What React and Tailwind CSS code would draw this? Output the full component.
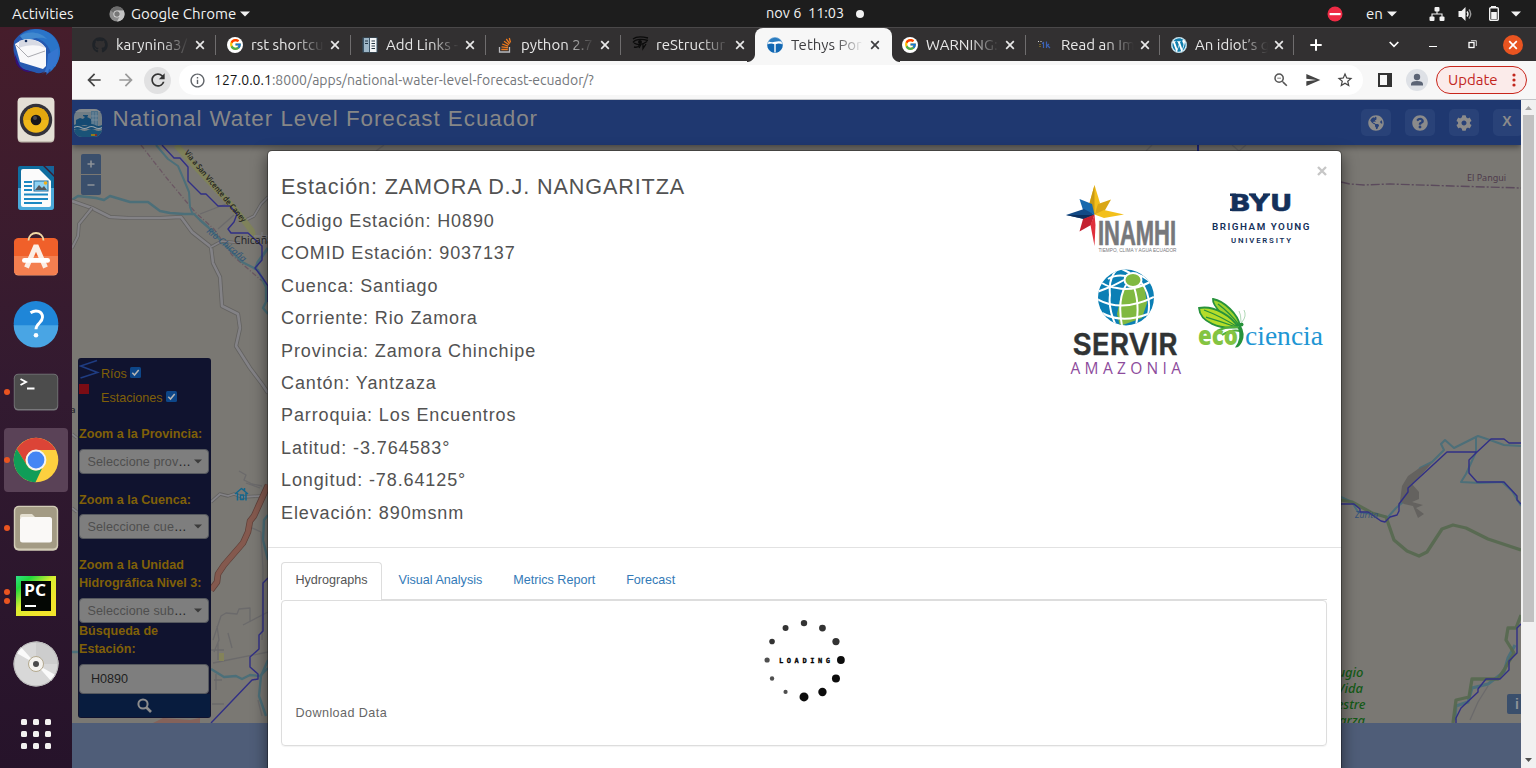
import React from "react";
import { FcGoogle } from "react-icons/fc";
import { FaGithub, FaWordpress, FaGlobeAmericas, FaQuestionCircle, FaCog } from "react-icons/fa";
import {
  MdArrowBack,
  MdArrowForward,
  MdRefresh,
  MdInfoOutline,
  MdZoomOut,
  MdSend,
  MdStarBorder,
} from "react-icons/md";

const UI = "font-['Ubuntu','Open_Sans',sans-serif]";
const ARIAL = "font-['Liberation_Sans',Arial,sans-serif]";

/* ---------- Desktop top bar ---------- */

function Caret({ className = "" }) {
  return (
    <svg className={className} width="10" height="6" viewBox="0 0 10 6">
      <path d="M0 0.5H10L5 5.5Z" fill="currentColor" />
    </svg>
  );
}

function TopBar() {
  return (
    <div className={`relative z-10 flex h-[27px] shrink-0 items-center bg-[#1d1d1d] text-[15px] leading-none text-[#f2f2f2] ${UI}`}>
      <span className="ml-3 w-[62px] whitespace-nowrap">Activities</span>
      <svg className="ml-[35px]" width="16" height="16" viewBox="0 0 16 16">
        <circle cx="8" cy="8" r="7.6" fill="#8c8c8c" />
        <path d="M1.4 4.3A7.6 7.6 0 0 1 14.7 4.5H8A3.5 3.5 0 0 0 4.7 7Z" fill="#6c6c6c" />
        <path d="M14.7 4.5A7.6 7.6 0 0 1 8 15.6L11.2 9.5A3.5 3.5 0 0 0 8 4.5Z" fill="#c4c4c4" />
        <circle cx="8" cy="8" r="3.6" fill="#ddd" />
        <circle cx="8" cy="8" r="2.7" fill="#777" />
      </svg>
      <span className="ml-[6px] w-[105px] whitespace-nowrap">Google Chrome</span>
      <Caret className="ml-1" />
      <div className="ml-[516px] flex items-center whitespace-pre">
        <span className="w-[80px] text-[14.5px]">nov 6  11:03</span>
        <span className="ml-[10px] size-2 rounded-full bg-[#f2f2f2]" />
      </div>
      <div className="ml-auto flex items-center pr-[15px]">
        <svg width="16" height="16" viewBox="0 0 16 16">
          <circle cx="8" cy="8" r="7.5" fill="#ee2b45" />
          <rect x="2.6" y="7" width="11" height="2.2" fill="#fff" />
        </svg>
        <span className="ml-[23px] w-[18px]">en</span>
        <Caret className="ml-[3px]" />
        <svg className="ml-8" width="16" height="16" viewBox="0 0 16 16" fill="#f2f2f2">
          <rect x="5.5" y="1" width="5" height="4.5" rx="1" />
          <rect x="0.5" y="10.5" width="5" height="4.5" rx="1" />
          <rect x="10.5" y="10.5" width="5" height="4.5" rx="1" />
          <path d="M8 5V8M3 11V8H13V11" fill="none" stroke="#f2f2f2" strokeWidth="1.1" />
        </svg>
        <svg className="ml-[13px]" width="16" height="16" viewBox="0 0 16 16">
          <path d="M0.5 5H3.5L7.5 1V15L3.5 11H0.5Z" fill="#f2f2f2" />
          <path d="M9 5.5Q11 8 9 10.5" stroke="#f2f2f2" strokeWidth="1.4" fill="none" />
          <path d="M11 3.5Q14.4 8 11 12.5" stroke="#9a9a9a" strokeWidth="1.4" fill="none" />
        </svg>
        <svg className="ml-[14px]" width="12" height="17" viewBox="0 0 12 17">
          <rect x="3" y="1" width="5" height="2" fill="#f2f2f2" />
          <rect x="1.7" y="2.7" width="8.6" height="12.6" rx="1" fill="none" stroke="#f2f2f2" strokeWidth="1.4" />
          <rect x="3.2" y="7" width="5.6" height="7" fill="#f2f2f2" />
        </svg>
        <Caret className="ml-[11px]" />
      </div>
    </div>
  );
}

/* ---------- Dock ---------- */

function ThunderbirdIcon() {
  return (
    <svg width="48" height="48" viewBox="0 0 48 48">
      <path d="M2 13C6 8 11 1 23 1C38 1 48 11 48 23C48 33 41 42 34 47C35 44 35 43 34 42C30 46 26 46 22 44L10 41C4 36 0 25 2 13Z" fill="#2559b0" />
      <path d="M8 8C14 2 24 0 31 2C41 5 47 14 48 23C48 31 45 38 38 44C42 34 40 22 33 15C27 9 16 8 8 8Z" fill="#2a74c8" />
      <path d="M8 8C14 3 28 3 35 11C28 8 20 11 12 13Z" fill="#4189cf" />
      <path d="M2 24L7 36C9 41 14 42 20 44C13 45 7 41 4 35Z" fill="#33107a" />
      <path d="M3 16C12 9 26 9 34 20L34 38L31 41L8 34Z" fill="#f8f8fa" />
      <path d="M4 17L16 29L33 23" fill="none" stroke="#a9aab0" strokeWidth="1" />
      <path d="M7 13C16 9 28 12 33 20C25 16 15 17 7 20Z" fill="#d7dae4" />
      <path d="M30 46C36 42 35 34 36 26L46 20C47 26 45 36 43 39L41 38L40 42L37 41L36 45L33 44Z" fill="#3575cf" />
      <circle cx="14" cy="13" r="1.3" fill="#122c5c" />
    </svg>
  );
}

function RhythmboxIcon() {
  return (
    <svg width="48" height="48" viewBox="0 0 48 48">
      <rect x="5.700" y="2" width="36.600" height="44.500" rx="4" fill="#c5bfb4" />
      <rect x="5.700" y="1.500" width="36.600" height="43.500" rx="4" fill="#e4dfd5" />
      <circle cx="24" cy="24" r="16.200" fill="#33323a" />
      <circle cx="24" cy="24" r="12.800" fill="#efb81a" />
      <path d="M11.200 24A12.800 12.800 0 0 1 36.800 24Z" fill="#e3a80f" />
      <circle cx="24" cy="24" r="5.300" fill="#17171b" />
      <circle cx="23" cy="22" r="2" fill="#474750" />
    </svg>
  );
}

function WriterIcon() {
  return (
    <svg width="48" height="48" viewBox="0 0 48 48">
      <path d="M8 2H31L42 13V43Q42 46 39 46H9Q6 46 6 43V4Q6 2 8 2Z" fill="#0f6d9f" />
      <path d="M6 24H42V43Q42 46 39 46H9Q6 46 6 43Z" fill="#4aa9da" />
      <path d="M11 5H27L39 17V41Q39 43 37 43H11Q9 43 9 41V7Q9 5 11 5Z" fill="#fbfbfb" />
      <path d="M33 2H42V11Z" fill="#17649a" />
      <path d="M12 18H20M12 22H20M12 26H20M12 30.500H36M12 35H36M12 39H30" stroke="#1b87c2" strokeWidth="2" />
      <rect x="22" y="17" width="14" height="10" fill="#8ed2f3" stroke="#1c6d9f" />
      <path d="M23 26L27 21L30 24L32 22L35 26Z" fill="#54585c" />
      <circle cx="33.500" cy="19" r="1.800" fill="#f3b01b" />
    </svg>
  );
}

function SoftwareIcon() {
  return (
    <svg width="48" height="48" viewBox="0 2 48 48">
      <rect x="2" y="9" width="44" height="36.500" rx="4.500" fill="#f7a077" />
      <rect x="2" y="8" width="44" height="36.500" rx="4.500" fill="#f0602a" />
      <path d="M2 26H46V40Q46 44.500 41.500 44.500H6.500Q2 44.500 2 40Z" fill="#f47f50" />
      <path d="M16.500 10.500A7.500 7.500 0 0 1 31.500 10.500" fill="none" stroke="#f2d9a6" strokeWidth="1.800" />
      <path d="M14.500 37.500L24 15.500L33.500 37.500" fill="none" stroke="#fbeee6" strokeWidth="5" strokeLinejoin="bevel" />
      <rect x="10" y="28" width="28" height="4.800" rx="2.400" fill="#fff" />
    </svg>
  );
}

function HelpIcon() {
  return (
    <svg width="48" height="48" viewBox="0 0.700 48 48">
      <circle cx="24" cy="24" r="22.300" fill="#1f86d8" />
      <path d="M1.700 26H46.300A22.300 22.300 0 0 1 1.700 26Z" fill="#49a5e4" />
      <path d="M18.500 13.500C24 10 30.500 12 30.500 18C30.500 23.500 24 24 24 30" fill="none" stroke="#fff" strokeWidth="2.900" />
      <circle cx="24" cy="36" r="2.300" fill="#fff" />
    </svg>
  );
}

function TerminalIcon() {
  return (
    <svg width="48" height="48" viewBox="0 0 48 48">
      <rect x="1.800" y="5.700" width="44.400" height="36.800" rx="4.500" fill="#77777a" />
      <rect x="2.600" y="6.500" width="42.800" height="34.500" rx="4" fill="#4c4c4c" />
      <path d="M8.500 11L14 14L8.500 17M15 20.500H22.500" fill="none" stroke="#fff" strokeWidth="1.900" />
    </svg>
  );
}

function ChromeIcon() {
  return (
    <svg width="48" height="48" viewBox="0 0 48 48">
      <circle cx="24" cy="24" r="22.300" fill="#fdd03f" />
      <path d="M4.700 12.900A22.300 22.300 0 0 1 43.800 14H24A10.500 10.500 0 0 0 14.500 29Z" fill="#dc4437" />
      <path d="M4.700 12.900L15 29.400A10.500 10.500 0 0 0 30 32.500L23.500 46.300A22.300 22.300 0 0 1 4.700 12.900Z" fill="#109d58" />
      <circle cx="24" cy="24" r="10.400" fill="#f4f4f4" />
      <circle cx="24" cy="24" r="8.400" fill="#4486f4" />
    </svg>
  );
}

function FilesIcon() {
  return (
    <svg width="48" height="48" viewBox="0 0 48 48">
      <rect x="1.800" y="1.800" width="44.400" height="45" rx="5" fill="#d2ccb7" />
      <rect x="3.200" y="3" width="41.600" height="41.600" rx="4" fill="#a39b84" />
      <path d="M8 14V12Q8 10 10 10H20L24 14Z" fill="#e4dfd0" />
      <rect x="8" y="13" width="32" height="25.500" rx="2.500" fill="#faf9f7" />
    </svg>
  );
}

function PyCharmIcon() {
  return (
    <svg width="48" height="48" viewBox="0 0 48 48">
      <defs>
        <linearGradient id="pc" x1="0" y1="0" x2="0.7" y2="0.8">
          <stop offset="0" stopColor="#2fe08a" />
          <stop offset="0.25" stopColor="#21d73d" />
          <stop offset="0.6" stopColor="#d9ee30" />
          <stop offset="1" stopColor="#f2e52b" />
        </linearGradient>
      </defs>
      <rect x="4" y="4" width="40" height="40" fill="url(#pc)" />
      <rect x="9" y="9" width="30" height="30" fill="#040704" />
      <text x="12" y="23.500" fill="#fff" fontFamily="Open Sans" fontWeight="700" fontSize="16" textLength="22" lengthAdjust="spacingAndGlyphs">PC</text>
      <rect x="13" y="33" width="11" height="2" fill="#fff" />
    </svg>
  );
}

function DiscIcon() {
  return (
    <svg width="48" height="48" viewBox="0 0 48 48">
      <circle cx="24" cy="24" r="22.500" fill="#d8d8d8" />
      <path d="M24 24L9 7A22.500 22.500 0 0 0 4.500 13ZM24 24L39 41A22.500 22.500 0 0 0 43.500 35Z" fill="#fafafa" />
      <path d="M24 24V1.500A22.500 22.500 0 0 1 46.500 24Z" fill="#cdcdcd" />
      <circle cx="24" cy="24" r="22" fill="none" stroke="#b7b7b7" />
      <circle cx="24" cy="24" r="7.500" fill="#f4f2ee" stroke="#b3a98f" />
      <circle cx="24" cy="24" r="3" fill="#4a4a4a" />
    </svg>
  );
}

function AppsIcon() {
  const cells = [0, 1, 2];
  return (
    <svg width="48" height="48" viewBox="0 0 48 48" fill="#f3f1f0">
      {cells.map((r) => cells.map((c) => (
        <rect key={`${r}-${c}`} x={9 + c * 12} y={9 + r * 12} width="6" height="6" rx="1.500" />
      )))}
    </svg>
  );
}

function Dock() {
  const items = [
    { Icon: ThunderbirdIcon, dots: 0 },
    { Icon: RhythmboxIcon, dots: 0 },
    { Icon: WriterIcon, dots: 0 },
    { Icon: SoftwareIcon, dots: 0 },
    { Icon: HelpIcon, dots: 0 },
    { Icon: TerminalIcon, dots: 1 },
    { Icon: ChromeIcon, dots: 1, active: true },
    { Icon: FilesIcon, dots: 1 },
    { Icon: PyCharmIcon, dots: 2 },
    { Icon: DiscIcon, dots: 0 },
  ];
  return (
    <div className="flex w-[72px] shrink-0 flex-col overflow-hidden bg-linear-to-b from-[#461d2b] via-[#321a30] to-[#26132a]">
      <div className="-mt-[9px] flex flex-col">
        {items.map(({ Icon, dots, active }, i) => (
          <div key={i} className="flex h-[68px] items-center">
            <div className={active ? "ml-1 flex h-16 w-16 items-center rounded-[4px] bg-[#5a4257]" : "ml-1 flex h-16 w-16 items-center"}>
              <div className="-ml-px flex w-2 flex-col items-center gap-[3px]">
                {Array.from({ length: dots }, (_, d) => (
                  <span key={d} className="size-[6px] shrink-0 rounded-full bg-[#ea5420]" />
                ))}
              </div>
              <span className="ml-px"><Icon /></span>
            </div>
          </div>
        ))}
        <div className="flex h-[72px] items-center justify-center"><AppsIcon /></div>
      </div>
    </div>
  );
}

/* ---------- Browser chrome ---------- */

function StackOverflowIcon() {
  return (
    <svg width="16" height="16" viewBox="0 0 16 16" fill="none">
      <path d="M2.500 10V15H12.500V10" stroke="#b9b9bd" strokeWidth="1.300" />
      <path d="M4.300 12.500H10.800M4.500 9.800L11 10.700M5.200 7L11.200 9.200M7 4.200L12 7.800M9.300 2L12.700 6.600M12.300 1L13.500 5.500" stroke="#ee7a1e" strokeWidth="1.300" />
    </svg>
  );
}

function BookmarkDocIcon() {
  return (
    <svg width="16" height="16" viewBox="0 0 16 16">
      <rect x="0.500" y="0.500" width="15" height="15" fill="#3a5569" />
      <rect x="2" y="1" width="5" height="14" fill="#9cb5c6" />
      <rect x="8" y="1" width="6.500" height="14" fill="#f2f5f7" />
      <path d="M3 4H6M3 6.500H6M9.500 4H13M9.500 6.500H13M9.500 9H13M9.500 11.500H13" stroke="#243745" strokeWidth="1.100" />
    </svg>
  );
}

function EyeOfHorusIcon() {
  return (
    <svg className="-mt-[3px] shrink-0" width="17" height="16" viewBox="0 0 17 16" fill="none" stroke="#0b0b0b" strokeWidth="1.300">
      <path d="M1 4C4 1.500 10 1.500 16 3M1 7.500C4 3.800 10 4 16 5.500M2 8C6 10.500 11 9.500 15 6.500M9 9.500L7 13M11 9V13.500L14 9" />
      <circle cx="8" cy="7" r="1.300" fill="#0b0b0b" />
      <path d="M7.500 10Q6 13 2 12" />
    </svg>
  );
}

function TethysIcon() {
  return (
    <svg width="16" height="16" viewBox="0 0 16 16">
      <circle cx="8" cy="8" r="7.500" fill="#fff" stroke="#5d9bd0" strokeWidth="0.700" />
      <path d="M1.500 4.500A7.500 7.500 0 0 1 14.500 4.500Q11 3.800 8 4.800T1.500 4.500Z" fill="#2c7dc0" />
      <path d="M0.400 7.500Q4 5.800 7.300 7.200V15.800A7.800 7.800 0 0 1 0.400 7.500ZM15.600 7.500Q12 5.800 8.700 7.200V15.800A7.800 7.800 0 0 0 15.600 7.500Z" fill="#1268b3" />
    </svg>
  );
}

function PixelIcon() {
  return (
    <svg width="16" height="16" viewBox="0 0 16 16">
      <path d="M1 4.500H2M3.500 4.500H4.500" stroke="#ddd" strokeWidth="1" />
      <path d="M3 7V11" stroke="#b99722" strokeWidth="1" strokeDasharray="1" />
      <path d="M5 6.500L6.500 5.500V11M9.500 4.500V11M9.500 9L12 7M10.500 8.500L13 11" stroke="#3c62b4" strokeWidth="1.200" fill="none" />
    </svg>
  );
}

const GoogleIcon = () => (
  <span className="flex size-4 items-center justify-center rounded-full bg-white"><FcGoogle size={13} /></span>
);

function CloseGlyph({ className = "" }) {
  return (
    <svg className={className} width="10" height="10" viewBox="0 0 10 10">
      <path d="M1.200 1.200L8.800 8.800M8.800 1.200L1.200 8.800" stroke="currentColor" strokeWidth="1.700" />
    </svg>
  );
}

const TABS = [
  { title: "karynina3/", icon: <FaGithub size={16} color="#1f2328" />, sep: true },
  { title: "rst shortcu", icon: <GoogleIcon />, sep: true },
  { title: "Add Links -", icon: <BookmarkDocIcon />, sep: true },
  { title: "python 2.7", icon: <StackOverflowIcon />, sep: true },
  { title: "reStructur", icon: <EyeOfHorusIcon /> },
  { title: "Tethys Por", icon: <TethysIcon />, active: true },
  { title: "WARNING:", icon: <GoogleIcon />, sep: true },
  { title: "Read an Im", icon: <PixelIcon />, sep: true, narrow: true },
  { title: "An idiot’s g", icon: <FaWordpress size={16} color="#117fae" className="rounded-full bg-white" />, sep: true, narrow: true },
];

function Tab({ title, icon, active, sep, narrow }) {
  const base = "relative flex h-[34px] shrink-0 items-center";
  const width = active ? " w-[137px] -mx-px pl-3" : narrow ? " w-[134px] pl-[11px]" : " w-[135px] pl-[11px]";
  const look = active ? " rounded-t-[8px] bg-[#f7f7f7] text-[#3d3d40]" : " text-[#e8e8e8]";
  return (
    <div className={base + width + look}>
      {active && (
        <>
          <span className="absolute bottom-0 -left-2 size-2 bg-[radial-gradient(circle_at_top_left,#323031_7.5px,#f7f7f7_8.5px)]" />
          <span className="absolute bottom-0 -right-2 size-2 bg-[radial-gradient(circle_at_top_right,#323031_7.5px,#f7f7f7_8.5px)]" />
        </>
      )}
      <span className="flex size-4 items-center justify-center">{icon}</span>
      <span className="ml-2 h-5 w-[73px] overflow-hidden text-[15px] leading-5 whitespace-nowrap [mask-image:linear-gradient(to_right,#000_60%,transparent)]">
        {title}
      </span>
      <CloseGlyph className="ml-[6px]" />
      {sep && <span className="absolute right-0 top-[7px] h-5 w-px bg-[#6f6d6e]" />}
    </div>
  );
}

function TabStrip() {
  return (
    <div className={`flex h-[34px] shrink-0 items-center border-t border-[#4a4849] bg-[#323031] pl-[9px] ${UI}`}>
      {TABS.map((t) => <Tab key={t.title} {...t} />)}
      <svg className="ml-4" width="12" height="12" viewBox="0 0 12 12">
        <path d="M6 0.300V11.700M0.300 6H11.700" stroke="#fff" strokeWidth="2" />
      </svg>
      <svg className="ml-[67px]" width="10" height="7" viewBox="0 0 10 7">
        <path d="M0.700 1L5 5.300L9.300 1" fill="none" stroke="#fff" strokeWidth="1.700" />
      </svg>
      <span className="mt-1 ml-[30px] h-px w-2 bg-white" />
      <svg className="ml-[31px]" width="9" height="9" viewBox="0 0 9 9" fill="none" stroke="#fff">
        <rect x="1" y="2.500" width="5" height="5" strokeWidth="1.300" />
        <path d="M3 0.700H8.300V6" strokeWidth="0.800" />
      </svg>
      <span className="ml-[26px] flex size-5 items-center justify-center rounded-full bg-[#e95420] text-white">
        <CloseGlyph />
      </span>
    </div>
  );
}

function Toolbar() {
  return (
    <div className={`flex h-[39px] shrink-0 items-center border-b border-[#c3c5c8] bg-[#f7f7f7] pl-3 text-[#444] ${UI}`}>
      <MdArrowBack size={20} />
      <MdArrowForward size={20} className="ml-3 text-[#9a9a9a]" />
      <span className="ml-[8px] flex size-[27px] items-center justify-center rounded-full bg-[#e1e1e2] text-[#333]">
        <MdRefresh size={20} />
      </span>
      <div className="ml-[8px] flex h-[30px] w-[1184px] items-center rounded-full bg-white pl-[10px]">
        <MdInfoOutline size={17} className="text-[#5f6368]" />
        <span className="ml-2 text-[14px] tracking-[0.020px] text-[#74777b]">
          <span className="text-[#161616]">127.0.0.1</span>:8000/apps/national-water-level-forecast-ecuador/?
        </span>
        <MdZoomOut size={18} className="ml-auto text-[#555]" />
        <MdSend size={16} className="ml-[15px] text-[#444]" />
        <MdStarBorder size={18} className="mr-[9px] ml-[15px] text-[#444]" />
      </div>
      <svg className="ml-[14px]" width="16" height="16" viewBox="0 0 16 16">
        <path d="M2 2H14V14H2Z" fill="none" stroke="#333" strokeWidth="2" />
        <rect x="10" y="2" width="4.500" height="12" fill="#333" />
      </svg>
      <svg className="ml-[13px]" width="22" height="22" viewBox="0 0 22 22">
        <circle cx="11" cy="11" r="11" fill="#dee1e6" />
        <circle cx="11" cy="8" r="3.200" fill="#5b6475" />
        <path d="M5 16.500V15Q5 12 11 12T17 15V16.500Z" fill="#5b6475" />
      </svg>
      <div className="ml-2 flex h-7 w-[91px] items-center rounded-full border border-[#c8261c] bg-[#fbebea] pl-[11px] text-[15px] text-[#c2261d]">
        <span className="w-[50px]">Update</span>
        <svg className="ml-[14px]" width="4" height="14" viewBox="0 0 4 14" fill="currentColor">
          <circle cx="2" cy="2" r="1.600" /><circle cx="2" cy="7" r="1.600" /><circle cx="2" cy="12" r="1.600" />
        </svg>
      </div>
    </div>
  );
}

/* ---------- Web page: header, map, side panel ---------- */

function AppHeader() {
  const btn = "flex h-[27px] w-[30px] items-center justify-center rounded-[5px] bg-[#294278] text-[#8b8b8b]";
  return (
    <div className="relative z-10 flex h-[45px] shrink-0 items-center overflow-hidden bg-[#1f3870] shadow-[0_2px_6px_rgba(0,0,0,0.45)]">
      <svg className="ml-[2px]" width="28" height="28" viewBox="0 0 28 28">
        <defs><clipPath id="logo"><rect width="28" height="28" rx="8" /></clipPath></defs>
        <g clipPath="url(#logo)">
          <rect width="28" height="28" fill="#717d85" />
          <rect width="28" height="3" fill="#848a8e" />
          <path d="M2 11L6 9L9 10L11 8L9 7V6H14V7L13 8L17 10V16H2Z" fill="#154a72" />
          <rect x="17" y="2" width="7" height="15" fill="#4d7088" />
          <path d="M19 3V17M22 3V17M17 7H24M17 11H24" stroke="#7b919e" strokeWidth="0.800" />
          <path d="M0 16Q3.500 14 7 16T14 16T21 16T28 16V20H0Z" fill="#174d74" />
          <path d="M0 21Q3.500 19 7 21T14 21T21 21T28 21V28H0Z" fill="#1a5378" />
          <path d="M0 18.500Q3.500 16.500 7 18.500T14 18.500T21 18.500T28 18.500" fill="none" stroke="#95a1a8" strokeWidth="1.200" />
          <rect x="17" y="25" width="4" height="2" fill="#8f7a20" /><rect x="21" y="25" width="2" height="2" fill="#8a2a2a" />
        </g>
      </svg>
      <span className={`ml-[10.500px] -mt-2 text-[22.4px] leading-7 tracking-[0.960px] whitespace-nowrap text-[#878787] ${ARIAL}`}>
        National Water Level Forecast Ecuador
      </span>
      <div className="-mr-[2px] ml-auto flex shrink-0 items-center gap-[14px]">
        <span className={btn}><FaGlobeAmericas size={16} /></span>
        <span className={btn}><FaQuestionCircle size={16} /></span>
        <span className={btn}><FaCog size={16} /></span>
        <span className={`${btn} pr-[2px] pb-[2px] text-[14px] font-bold ${ARIAL}`}>X</span>
      </div>
    </div>
  );
}

function RoadCased({ d, w = 3.2 }) {
  return (
    <>
      <path d={d} stroke="#636260" strokeWidth={w} />
      <path d={d} stroke="#838286" strokeWidth={w - 1.6} />
    </>
  );
}

function MapCanvas() {
  return (
    <svg className="block" width="1449" height="578" viewBox="72 145 1449 578" fill="none" strokeLinejoin="round">
      <rect x="72" y="145" width="1449" height="578" fill="#7a7873" />
      {/* provincial border */}
      <path d="M141 145L165 176L184 199L196 213L214 229L232 255L262 281" stroke="#6b5763" strokeWidth="1.300" strokeDasharray="5 2 1 2" />
      {/* rivers */}
      <g stroke="#4c6f79" strokeWidth="2.400">
        <path d="M72 200L78 196L96 198L104 200L110 196L120 199L130 202H148L160 211L170 213L184 214H194L200 220L208 227L224 244L242 262L258 270L266 287V302L263 308L268 314" />
        <path d="M156 145L168 159L178 166L184 180L189 192L190 207L193 215" strokeWidth="2" />
        <path d="M268 248L258 262L255 270" strokeWidth="3" />
        <path d="M72 652H78M211 669L224 677L236 676L242 679L250 675L260 676L268 668" />
        <path d="M268 515L264 520L263 540L268 560M268 660L261 676L259 696L266 716" />
        <path d="M1341 497L1352 502L1358 512L1372 514L1388 517L1396 508L1403 502L1407 488L1420 468L1432 462L1444 450L1441 444L1445 440L1454 448L1466 442L1478 436L1490 440L1504 445L1521 446" strokeWidth="2" />
        <path d="M1476 436V452L1466 474L1461 482L1480 483L1502 482L1512 491L1521 506" strokeWidth="2" />
        <path d="M1515 645L1508 658L1504 672L1488 684L1472 688L1468 702L1456 706L1455 720" strokeWidth="3" />
      </g>
      {/* protected area outline */}
      <g stroke="#56694f" strokeWidth="3.300" opacity="0.9">
        <path d="M1341 500L1352 502L1372 513L1386 517L1394 540L1407 551L1419 556L1427 552L1442 529L1453 525L1466 528L1488 539L1521 550" />
        <path d="M1521 615L1516 628H1508L1506 640L1514 653L1504 670L1498 679H1472L1469 697L1456 700L1453 723" />
      </g>
      {/* quarry */}
      <path d="M1402 486L1408 476L1418 469L1432 463L1422 474L1412 484L1419 492V499L1412 502L1423 505L1416 508L1424 514L1418 518L1413 506L1404 504L1400 501Z" fill="#64625f" />
      {/* roads */}
      <RoadCased w={4.2} d="M72 201L92 208L110 217L128 218H160L181 217L192 232L211 247L213 263L220 277L222 306L238 314L240 328L236 346L250 368L262 384L268 393" />
      <RoadCased w={3.6} d="M92 208L79 224L78 236L72 248" />
      <RoadCased d="M211 247L222 241L240 243" />
      <RoadCased d="M246 220L254 216L261 204L268 197" />
      <RoadCased w={3.4} d="M72 434L77 438M72 508L77 512M211 502L220 494L228 496L234 494L242 497L260 496" />
      <g stroke="#6b6a6b" strokeWidth="1.300">
        <path d="M239 471L246 475L244 480L252 484L262 486M246 483L260 488M250 527L261 532L263 570L262 640" />
        <path d="M213 640L221 616L226 613L237 614L239 609L250 608V622M243 625L268 612M217 626L219 640L214 652M228 633L232 648M213 663L268 652M211 650H224M218 643V660M214 680H222M216 674V690M212 704H224M258 700L262 716" />
        <path d="M200 214L226 204M218 229L234 215" />
        <path d="M376 151L384 145M1146 151L1152 145M1232 145L1239 151L1246 145" />
        <path d="M1470 720L1478 702L1488 686" />
      </g>
      <path d="M268 485L254 516L250 521L248 532L243 543L224 565L218 574L217 582L211 590" stroke="#5e4039" strokeWidth="6.500" />
      <path d="M268 485L254 516L250 521L248 532L243 543L224 565L218 574L217 582L211 590" stroke="#84594e" strokeWidth="5" />
      <path d="M153 723L163 718L190 720L200 718V723Z" fill="#84625a" />
      <rect x="219" y="653" width="5" height="8" fill="#84835a" />
      <path d="M176 145L194 165L232 206L245 222L252 231L254 241" stroke="#7f825b" strokeWidth="6" />
      <path d="M254 236H268M252 240H268M262 232V244" stroke="#848386" strokeWidth="1.500" />
      {/* modelled streams */}
      <g stroke="#312f86" strokeWidth="1.400">
        <path d="M162 145L174 158H180L188 167V181L201 194H206L218 206H230L237 214L234 222L228 229L231 233H248L262 246V260L255 268L262 277L268 286V302" />
        <path d="M1198 145V151" stroke="#1f2b88" strokeWidth="2" />
        <path d="M268 578L263 583V631L259 635V649L250 657V667L258 674V679L252 680L211 723" />
        <path d="M1341 504H1354L1360 509V512H1368L1381 521L1385 522L1390 517L1397 515L1399 511V504L1408 492V488L1447 452H1477L1491 439H1504L1509 443H1521M1477 452L1469 460V473L1477 482H1504L1517 496V500L1521 504" />
        <path d="M1521 624L1517 628V653L1509 661V670L1500 679H1486L1478 689V692L1461 708L1456 718V723" />
      </g>
      <path d="M235 494L241.500 488.500L248 494M237.500 493V500.500M246 493V500.500M240.500 499.500V495H243.500V499.500Z M244.500 488V490.500" stroke="#14668c" strokeWidth="1.500" />
      {/* labels */}
      <g fontFamily="Noto Sans" stroke="none">
        <text x="234" y="244" fontSize="10.500" fill="#25252a">Chicaña</text>
        <text x="70" y="413" fontSize="9.500" fontWeight="600" fill="#2b2b2f">a</text>
        <text x="1467" y="181" fontSize="9" fill="#4e3b4c">El Pangui</text>
        <text fontSize="8" fontWeight="600" fill="#26261f" transform="translate(184 153) rotate(50)" textLength="91" lengthAdjust="spacingAndGlyphs">Vía a San Vicente de Caney</text>
        <text fontSize="9" fontStyle="italic" fill="#2f5679" transform="translate(206 232) rotate(39)" textLength="48" lengthAdjust="spacingAndGlyphs">Río Chicaña</text>
        <text x="1355" y="518" fontSize="8.500" fontStyle="italic" fill="#34507a" textLength="23">Zurita</text>
        <g fontSize="13" fontStyle="italic" fontWeight="500" fill="#135a16" textAnchor="end">
          <text x="1363.500" y="677">Refugio</text>
          <text x="1363" y="693">de Vida</text>
          <text x="1365.500" y="709">Silvestre</text>
          <text x="1365" y="725">El Zarza</text>
        </g>
      </g>
      <path d="M1341 182L1350 184L1364 185L1390 184L1452 186L1521 188" stroke="#5b4a5c" strokeWidth="1.400" strokeDasharray="9 2 2 2" />
    </svg>
  );
}

function CheckBox() {
  return (
    <svg width="11" height="11" viewBox="0 0 11 11">
      <rect width="11" height="11" rx="1.500" fill="#0d4688" />
      <path d="M2.300 5.700L4.500 8L8.700 2.900" fill="none" stroke="#b5b5b5" strokeWidth="1.500" />
    </svg>
  );
}

function Select({ children }) {
  return (
    <div className="flex h-[25px] items-center rounded-[4px] border border-[#55585e] bg-[#7e7e7e] pr-[6px] pl-[7.500px] text-[12.600px] text-[#4e4e4e]">
      <span className="tracking-[0.080px] whitespace-nowrap">{children}<span className="tracking-normal text-[#222]">…</span></span>
      <svg className="ml-auto" width="8" height="5" viewBox="0 0 8 5"><path d="M0 0.500H8L4 4.500Z" fill="#3b3b3b" /></svg>
    </div>
  );
}

function SidePanel() {
  return (
    <div className={`absolute top-[213px] left-[6px] flex h-[360px] w-[133px] flex-col rounded-[3px] bg-[#10132f] text-[12.600px] leading-[18px] text-[#806008] ${ARIAL}`}>
      <div className="flex min-h-0 flex-1 flex-col pr-[2px] pl-px">
        <div className="flex h-[25px] items-start">
          <svg width="22" height="22" viewBox="0 0 22 22"><path d="M18 2.500L1.500 8L18.500 14.500L1.500 20" fill="none" stroke="#1f3c82" strokeWidth="1.600" /></svg>
          <span className="mt-[7px] w-[29px]">Ríos</span>
          <span className="mt-[9px]"><CheckBox /></span>
        </div>
        <div className="flex h-[42px] items-start">
          <span className="mt-px size-[10px] bg-[#7a0c14]" />
          <span className="mt-[6px] ml-[12px] w-[65px]">Estaciones</span>
          <span className="mt-[8px]"><CheckBox /></span>
        </div>
        <span className="font-bold whitespace-nowrap">Zoom a la Provincia:</span>
        <div className="mt-[6px]"><Select>Seleccione prov</Select></div>
        <span className="mt-[17px] font-bold">Zoom a la Cuenca:</span>
        <div className="mt-[5px]"><Select>Seleccione cue</Select></div>
        <span className="mt-[17px] font-bold whitespace-nowrap">Zoom a la Unidad<br />Hidrográfica Nivel 3:</span>
        <div className="mt-[6px]"><Select>Seleccione sub</Select></div>
        <span className="-mt-px font-bold">Búsqueda de<br />Estación:</span>
        <div className="mt-[6px] flex h-[30px] shrink-0 items-center rounded-[4px] border border-[#55585e] bg-[#7e7e7e] pl-[11px] text-[#1f1f1f]">H0890</div>
      </div>
      <div className="mx-px mb-px flex h-[23px] items-center justify-center bg-[#081c3e]">
        <svg width="15" height="15" viewBox="0 0 15 15" fill="none" stroke="#8c8c8c">
          <circle cx="6" cy="6" r="4.600" strokeWidth="2" /><path d="M9.500 9.500L14 14" strokeWidth="2.600" />
        </svg>
      </div>
    </div>
  );
}

function MapSection() {
  const zoom = "flex h-5 w-5 items-center justify-center bg-[#3a4f6c]";
  return (
    <div className="relative h-[578px] shrink-0 overflow-hidden">
      <MapCanvas />
      <div className="absolute top-[9px] left-[9px] flex flex-col gap-px overflow-hidden rounded-[2px] text-[#8d9298]">
        <span className={zoom}><svg width="8" height="8" viewBox="0 0 8 8"><path d="M4 0.500V7.500M0.500 4H7.500" stroke="currentColor" strokeWidth="1.600" /></svg></span>
        <span className={zoom}><svg width="8" height="8" viewBox="0 0 8 8"><path d="M0.500 4H7.500" stroke="currentColor" strokeWidth="1.600" /></svg></span>
      </div>
      <span className={`absolute right-0 bottom-[9px] flex h-5 w-[14px] items-center justify-end rounded-l-[2px] bg-[#3a4f6c] pr-[2px] text-[14px] font-bold text-[#8d9298] ${ARIAL}`}>i</span>
      <SidePanel />
    </div>
  );
}

/* ---------- Partner logos ---------- */

function InamhiLogo() {
  return (
    <svg width="130" height="78" viewBox="1062 180 130 78">
      <path d="M1094.500 185L1100 203L1094.500 214.500L1089 205Z" fill="#f3c01c" />
      <path d="M1094.500 185V214.500L1089 205Z" fill="#c99a14" />
      <path d="M1111 199.500L1104 212L1094.500 214.500L1098 204Z" fill="#d9a616" />
      <path d="M1124 214.500L1104 218L1094.500 214.500L1104 210Z" fill="#f3c01c" />
      <path d="M1079.500 199L1092 204L1094.500 214.500L1083 210Z" fill="#1769ad" />
      <path d="M1066 215L1084 209L1094.500 214.500L1084 219Z" fill="#124a86" />
      <path d="M1066 215H1094.500L1084 219Z" fill="#0b2f5e" />
      <path d="M1079.500 231.500L1083 219L1094.500 214.500L1091 225Z" fill="#c4202f" />
      <path d="M1094.500 246L1090.500 225L1094.500 214.500L1095.500 225Z" fill="#e0303b" />
      <text x="1098" y="245" fontFamily="Liberation Sans Narrow, Liberation Sans" fontWeight="700" fontSize="35" fill="#77787b" stroke="#77787b" strokeWidth="0.700" textLength="78" lengthAdjust="spacingAndGlyphs">INAMHI</text>
      <text x="1098.500" y="252.300" fontFamily="Liberation Sans" fontSize="5.800" fill="#77787b" textLength="78" lengthAdjust="spacingAndGlyphs">TIEMPO, CLIMA Y AGUA ECUADOR</text>
    </svg>
  );
}

function ByuLogo() {
  return (
    <svg width="132" height="78" viewBox="1196 180 132 78" fill="#14305a">
      <text x="1229.500" y="210.700" fontFamily="DejaVu Sans" fontWeight="700" fontSize="23.500" stroke="#14305a" strokeWidth="0.400" textLength="63" lengthAdjust="spacingAndGlyphs">BYU</text>
      <path d="M1230 193.500H1236V196H1230ZM1230 208.500H1236V211H1230ZM1249 193.500H1256V195.500H1249ZM1263 193.500H1270V195.500H1263Z" />
      <text x="1212" y="230" fontFamily="Roboto" fontWeight="600" fontSize="9.800" textLength="97.500">BRIGHAM YOUNG</text>
      <text x="1231" y="242.500" fontFamily="Roboto" fontWeight="600" fontSize="7.800" textLength="60">UNIVERSITY</text>
    </svg>
  );
}

function ServirLogo() {
  return (
    <svg width="130" height="116" viewBox="1062 264 130 116">
      <defs><clipPath id="globe"><circle cx="1126" cy="297.500" r="28" /></clipPath></defs>
      <g clipPath="url(#globe)">
        <rect x="1097" y="269" width="58" height="58" fill="#0b7fb5" />
        <path d="M1123 289L1144 284L1147 303L1142 318L1120 326L1117 314L1120 300Z" fill="#80b941" />
        <g fill="none" stroke="#fff" strokeWidth="2">
          <ellipse cx="1133" cy="280" rx="8.500" ry="7" fill="#80b941" />
          <path d="M1119 268Q1108 276 1110 295Q1108 308 1116 326M1124 280Q1112 287 1097 292M1126 285Q1117 300 1122 326M1134 287Q1140 305 1136 326M1141 282Q1152 296 1148 315M1139 275Q1148 278 1154 286M1130 273L1122 269" />
          <path d="M1102 283Q1108 287 1117 288Q1132 292 1152 281M1097 299Q1122 313 1154 297M1102 313Q1122 324 1148 314M1108 279Q1116 274 1126 276" />
        </g>
      </g>
      <text x="1072.500" y="354.700" fontFamily="Inter" fontWeight="600" fontSize="30" fill="#303334" stroke="#303334" strokeWidth="0.400" textLength="105" lengthAdjust="spacingAndGlyphs">SERVIR</text>
      <text x="1070.500" y="374" fontFamily="Open Sans" fontWeight="400" fontSize="15.500" fill="#8d4b9c" textLength="110.500">AMAZONIA</text>
    </svg>
  );
}

function EcoCienciaLogo() {
  return (
    <svg width="132" height="116" viewBox="1196 264 132 116">
      <path d="M1240 326C1228 322 1212 306 1213 299C1224 301 1238 314 1240 326Z" fill="#9fd32f" stroke="#27923b" strokeWidth="1.800" />
      <path d="M1238 327C1220 330 1200 322 1199 308C1215 305 1232 317 1238 327Z" fill="#b5dc2a" stroke="#27923b" strokeWidth="1.800" />
      <path d="M1204 310Q1220 316 1236 326M1218 304Q1230 313 1239 325M1206 317Q1220 321 1236 327" stroke="#27923b" strokeWidth="1.300" fill="none" />
      <path d="M1217 331Q1230 325 1240 328M1222 335Q1232 329 1240 331" stroke="#4fae3a" strokeWidth="2" fill="none" />
      <path d="M1240 324Q1246 334 1242 342Q1239 348 1235 347.500Q1242 338 1238 328Z" fill="#27923b" />
      <circle cx="1241.500" cy="324.500" r="2" fill="#27923b" />
      <path d="M1241 322Q1241 314 1239 311M1242 322Q1247 316 1244 310" stroke="#8fc99a" strokeWidth="0.700" fill="none" />
      <text x="1198" y="345" fontFamily="Open Sans" fontWeight="800" fontSize="26" fill="#84c441" textLength="40" lengthAdjust="spacingAndGlyphs">eco</text>
      <text x="1245" y="345" fontFamily="Liberation Serif" fontSize="27" fill="#1e96d4" textLength="78" lengthAdjust="spacingAndGlyphs">ciencia</text>
    </svg>
  );
}

/* ---------- Station modal ---------- */

const DETAILS = [
  "Código Estación: H0890",
  "COMID Estación: 9037137",
  "Cuenca: Santiago",
  "Corriente: Rio Zamora",
  "Provincia: Zamora Chinchipe",
  "Cantón: Yantzaza",
  "Parroquia: Los Encuentros",
  "Latitud: -3.764583°",
  "Longitud: -78.64125°",
  "Elevación: 890msnm",
];

const LOADER_RADII = [3.9, 4, 4.2, 4.5, 2.1, 2.2, 2.6, 2.8, 3, 3.2, 3.4, 3.6];

function Loader() {
  return (
    <svg width="86" height="86" viewBox="-43 -43 86 86">
      {LOADER_RADII.map((r, i) => {
        const a = (i * Math.PI) / 6;
        const shade = i < 4 ? "#0c0c0c" : i < 7 ? "#4f4f4f" : "#333";
        return <circle key={i} cx={36.900 * Math.cos(a)} cy={36.900 * Math.sin(a)} r={r} fill={shade} />;
      })}
      <text x="-25" y="2.800" fontFamily="DejaVu Sans Mono" fontWeight="700" fontSize="7" textLength="51" fill="#000" stroke="#000" strokeWidth="0.300">LOADING</text>
    </svg>
  );
}

function StationModal() {
  return (
    <div className={`absolute top-[50px] left-[195px] flex h-[700px] w-[1075px] flex-col rounded-[5px] border border-black/30 bg-white bg-clip-padding text-[#525252] shadow-[0_5px_15px_rgba(0,0,0,0.5)] ${ARIAL}`}>
      <div className="flex h-[397px] justify-between border-b border-[#e2e2e2] pl-[13px]">
        <div className="flex flex-col">
          <h3 className="h-[54px] pt-[20px] text-[21.600px] leading-8 tracking-[0.890px] whitespace-nowrap">Estación: ZAMORA D.J. NANGARITZA</h3>
          {DETAILS.map((d) => (
            <p key={d} className="h-[32.400px] text-[18px] leading-[32.400px] tracking-[0.890px] whitespace-nowrap">{d}</p>
          ))}
        </div>
        <div className="flex flex-col">
          <div className="flex h-[29px] items-center justify-end pt-[11px] pr-[14px] text-[#c6c6c6]">
            <svg width="10" height="10" viewBox="0 0 10 10"><path d="M1 1L9 9M9 1L1 9" stroke="currentColor" strokeWidth="2.300" /></svg>
          </div>
          <div className="mr-[13px] grid grid-cols-[130px_132px] gap-x-1 gap-y-[6px]">
            <InamhiLogo />
            <ByuLogo />
            <ServirLogo />
            <EcoCienciaLogo />
          </div>
        </div>
      </div>
      <div className="flex flex-col pt-[14px] pr-[14px] pl-[13px] text-[12.600px]">
        <div className="flex h-[38px] border-b border-[#ddd]">
          <span className="z-10 flex h-[38px] w-[101px] shrink-0 items-center justify-center rounded-t-[4px] border border-b-0 border-[#ddd] bg-white pb-[2px] text-[#555]">Hydrographs</span>
          <div className="flex items-center gap-[31px] pb-px pl-[16.500px] text-[#337ab7]">
            <span>Visual Analysis</span>
            <span>Metrics Report</span>
            <span>Forecast</span>
          </div>
        </div>
        <div className="flex h-[146px] flex-col items-center rounded-[4px] border border-[#ddd] pt-[16px] shadow-[0_1px_1px_rgba(0,0,0,0.05)]">
          <Loader />
          <span className="mt-px self-start pl-[13.500px] leading-[18px] tracking-[0.420px] text-[#666]">Download Data</span>
        </div>
      </div>
    </div>
  );
}

function ScrollBar() {
  return (
    <div className="flex w-[15px] shrink-0 flex-col items-center bg-[#f1f1f1]">
      <svg className="mt-[6px]" width="7" height="4" viewBox="0 0 7 4"><path d="M3.500 0L7 4H0Z" fill="#a3a3a3" /></svg>
      <span className="mt-[5px] h-[507px] w-[11px] bg-[#c1c1c1]" />
      <svg className="mt-auto mb-[6px]" width="7" height="4" viewBox="0 0 7 4"><path d="M0 0H7L3.500 4Z" fill="#505050" /></svg>
    </div>
  );
}

export default function App() {
  return (
    <div className="flex h-[768px] w-[1536px] flex-col overflow-hidden bg-[#1d1d1d]">
      <TopBar />
      <div className="flex min-h-0 flex-1">
        <Dock />
        <div className="flex min-w-0 flex-1 flex-col">
          <TabStrip />
          <Toolbar />
          <div className="flex min-h-0 flex-1">
            <div className="relative flex min-w-0 flex-1 flex-col overflow-hidden bg-[#4f5d78]">
              <AppHeader />
              <MapSection />
              <div className="absolute inset-0 z-20 overflow-hidden">
                <StationModal />
              </div>
            </div>
            <ScrollBar />
          </div>
        </div>
      </div>
    </div>
  );
}
